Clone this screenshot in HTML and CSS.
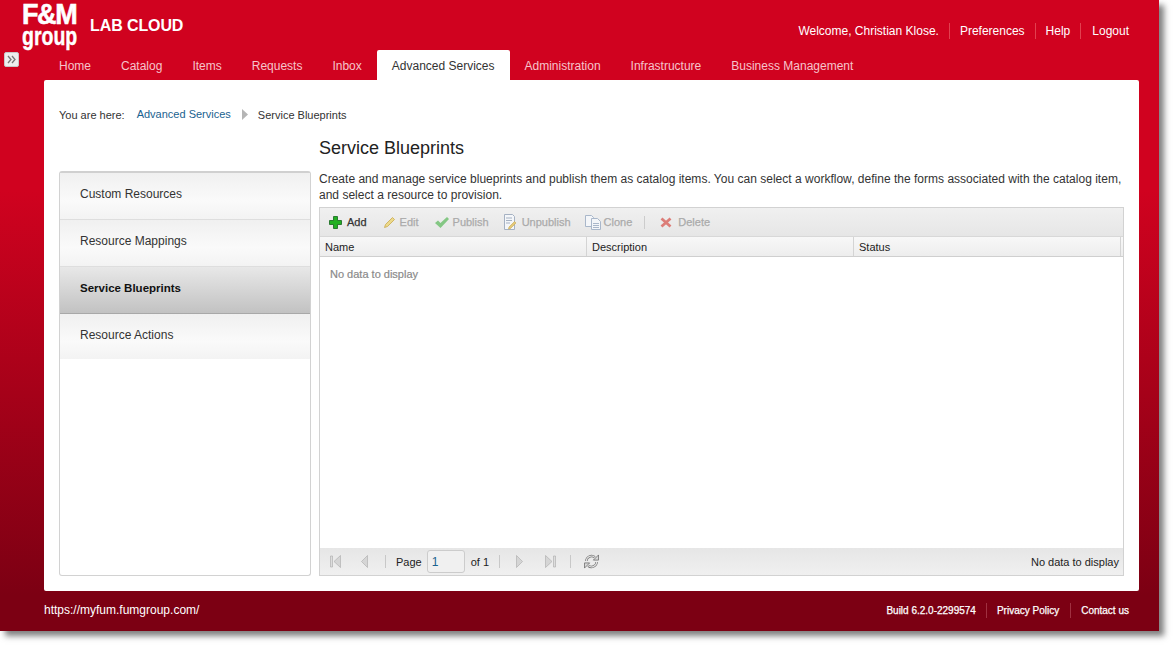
FILE: index.html
```html
<!DOCTYPE html>
<html lang="en">
<head>
    <meta charset="UTF-8">
    <title>Service Blueprints</title>
    <link rel="stylesheet" href="styles.css">
</head>
<body>
    <div class="frame">
        <!-- Header -->
        <div class="header">
            <div class="logo">
                <div class="logo-top">F&amp;M</div>
                <div class="logo-bottom">group</div>
            </div>
            <div class="product">LAB CLOUD</div>
            <ul class="user-links">
                <li>Welcome, Christian Klose.</li>
                <li>Preferences</li>
                <li>Help</li>
                <li>Logout</li>
            </ul>
        </div>

        <button class="expand">
            <svg width="9" height="9" viewBox="0 0 9 9"><path d="M1 1l3 3.5L1 8M5 1l3 3.5L5 8" fill="none" stroke="#777" stroke-width="1.3"/></svg>
        </button>

        <!-- Main tabs -->
        <ul class="tabs">
            <li>Home</li>
            <li>Catalog</li>
            <li>Items</li>
            <li>Requests</li>
            <li>Inbox</li>
            <li class="active">Advanced Services</li>
            <li>Administration</li>
            <li>Infrastructure</li>
            <li>Business Management</li>
        </ul>

        <!-- Content -->
        <div class="panel">
            <div class="breadcrumb">
                <span class="here">You are here:</span>
                <a class="crumb">Advanced Services</a>
                <svg class="crumb-arrow" width="6" height="11" viewBox="0 0 6 11"><path d="M0 0l6 5.5L0 11z" fill="#b5b5b5"/></svg>
                <span>Service Blueprints</span>
            </div>

            <div class="columns">
                <div class="sidenav">
                    <div class="side-item">Custom Resources</div>
                    <div class="side-item">Resource Mappings</div>
                    <div class="side-item selected">Service Blueprints</div>
                    <div class="side-item">Resource Actions</div>
                </div>

                <div class="main">
                    <h1>Service Blueprints</h1>
                    <p class="intro">Create and manage service blueprints and publish them as catalog items. You can select a workflow, define the forms associated with the catalog item, and select a resource to provision.</p>

                    <div class="grid-box">
                        <div class="toolbar">
                            <span class="tool tool-add">
                                <svg width="13" height="13" viewBox="0 0 13 13"><path d="M4.500.5h4v4h4v4h-4v4h-4v-4h-4v-4h4z" fill="#22b022" stroke="#14651c" stroke-width=".8"/></svg>
                                Add
                            </span>
                            <span class="tool">
                                <svg width="13" height="13" viewBox="0 0 13 13"><path d="M9.500 1.500l2 2L4.500 10.500l-3 1 1-3z" fill="#ecd98a" stroke="#c9a94e" stroke-width=".8"/></svg>
                                Edit
                            </span>
                            <span class="tool tool-publish">
                                <svg width="16" height="13" viewBox="0 0 16 13"><path d="M1 7l3-2.500 2.500 2.500L13 1l2 2-8.500 9z" fill="#84c784"/></svg>
                                Publish
                            </span>
                            <span class="tool tool-unpublish">
                                <svg width="14" height="16" viewBox="0 0 14 16"><path d="M1.500.5h8l2 2v13h-10z" fill="#f4f6f9" stroke="#a5b1c2"/><path d="M3 4h6M3 6.500h6M3 9h4" stroke="#a5b1c2"/><path d="M11.500 7.500l1.500 1.500-5.500 5.500-2 .5.500-2z" fill="#e3c879" stroke="#c9a94e" stroke-width=".6"/></svg>
                                Unpublish
                            </span>
                            <span class="tool tool-clone">
                                <svg width="16" height="16" viewBox="0 0 16 16"><path d="M.5 1.500h6l2 2v9h-8z" fill="#f4f6f9" stroke="#a9b7ca"/><path d="M6.500 4.500h6l3 3v8h-9z" fill="#f4f6f9" stroke="#a9b7ca"/><path d="M8 9.500h6M8 11.500h6M8 13.500h6" stroke="#a9b7ca"/></svg>
                                Clone
                            </span>
                            <span class="tool-sep"></span>
                            <span class="tool tool-delete">
                                <svg width="12" height="11" viewBox="0 0 12 11"><path d="M1.500 1.500l9 8M10.500 1.500l-9 8" stroke="#dc7d78" stroke-width="2.800"/></svg>
                                Delete
                            </span>
                        </div>

                        <div class="grid-head">
                            <div class="col">Name</div>
                            <div class="col">Description</div>
                            <div class="col">Status</div>
                        </div>

                        <div class="grid-body">No data to display</div>

                        <div class="pager">
                            <svg class="pg-first" width="11" height="13" viewBox="0 0 11 13"><path d="M.5 1h2v11h-2z" fill="#ddd" stroke="#aaa" stroke-width=".6"/><path d="M10.500.5v12L4 6.500z" fill="#d5d5d5" stroke="#aaa" stroke-width=".6"/></svg>
                            <svg class="pg-prev" width="7" height="13" viewBox="0 0 7 13"><path d="M6.500.5v12L.5 6.500z" fill="#d5d5d5" stroke="#aaa" stroke-width=".6"/></svg>
                            <span class="pg-sep pg-sep-first"></span>
                            <span>Page</span>
                            <input class="pg-input" value="1">
                            <span>of 1</span>
                            <span class="pg-sep"></span>
                            <svg class="pg-next" width="7" height="13" viewBox="0 0 7 13"><path d="M.5.5v12l6-6z" fill="#d5d5d5" stroke="#aaa" stroke-width=".6"/></svg>
                            <svg class="pg-last" width="11" height="13" viewBox="0 0 11 13"><path d="M.5.500v12L7 6.500z" fill="#d5d5d5" stroke="#aaa" stroke-width=".6"/><path d="M8.500 1h2v11h-2z" fill="#ddd" stroke="#aaa" stroke-width=".6"/></svg>
                            <span class="pg-sep pg-sep-last"></span>
                            <svg class="pg-refresh" width="15" height="15" viewBox="0 0 16 16">
                                <path d="M2.500 7.500A5.500 5.500 0 0 1 11.500 3.500" fill="none" stroke="#777" stroke-width="2.600"/>
                                <path d="M13.500 8.500A5.500 5.500 0 0 1 4.500 12.500" fill="none" stroke="#777" stroke-width="2.600"/>
                                <path d="M2.500 7.500A5.500 5.500 0 0 1 11.500 3.500" fill="none" stroke="#e4e4e4" stroke-width="1.100"/>
                                <path d="M13.500 8.500A5.500 5.500 0 0 1 4.500 12.500" fill="none" stroke="#e4e4e4" stroke-width="1.100"/>
                                <path d="M10 6.500h5.500V1zM6 9.500H.5V15z" fill="#d8d8d8" stroke="#666" stroke-width=".8"/>
                            </svg>
                            <span class="pg-status">No data to display</span>
                        </div>
                    </div>
                </div>
            </div>
        </div>

        <!-- Footer -->
        <div class="footer">
            <span class="site">https://myfum.fumgroup.com/</span>
            <ul class="foot-links">
                <li>Build 6.2.0-2299574</li>
                <li>Privacy Policy</li>
                <li>Contact us</li>
            </ul>
        </div>
    </div>
</body>
</html>
```

FILE: styles.css
```css
html, body {
    margin: 0;
    padding: 0;
    background: #fff;
}

body {
    font-family: "Liberation Sans", Arial, sans-serif;
    font-size: 12px;
    color: #333;
    width: 1174px;
    height: 646px;
    overflow: hidden;
}

ul {
    list-style: none;
    margin: 0;
    padding: 0;
}

.frame {
    position: relative;
    width: 1159px;
    height: 631px;
    background: linear-gradient(to bottom, #d0021f 0, #d0021f 190px, #7c0013 595px, #7c0013 100%);
    box-shadow: 5px 5px 6px rgba(60, 60, 60, 0.65);
    display: flex;
    flex-direction: column;
}

/* Header */
.header {
    height: 50px;
    display: flex;
    align-items: flex-start;
    color: #fff;
    flex: none;
}

.logo {
    margin: 3px 0 0 22px;
    width: 56px;
    color: #fff;
    font-weight: bold;
}

.logo-top {
    font-size: 29px;
    height: 23px;
    line-height: 23px;
    letter-spacing: -1.5px;
    -webkit-text-stroke: 0.6px #fff;
    transform: scaleX(0.93);
    transform-origin: left;
}

.logo-bottom {
    font-size: 25px;
    height: 22px;
    line-height: 21px;
    -webkit-text-stroke: 0.4px #fff;
    transform: scaleX(0.78);
    transform-origin: left;
}

.product {
    margin: 17px 0 0 12px;
    font-size: 16px;
    line-height: 18px;
    font-weight: bold;
    letter-spacing: -0.1px;
}

.user-links {
    margin: 23px 20px 0 auto;
    display: flex;
    height: 16px;
}

.user-links li {
    line-height: 16px;
    padding: 0 10px;
    border-left: 1px solid #e2404f;
}

.user-links li:first-child {
    border-left: 0;
}

.user-links li:last-child {
    padding-left: 11px;
}

.expand {
    position: absolute;
    left: 4px;
    top: 52px;
    width: 15px;
    height: 15px;
    padding: 0;
    border: 1px solid #c8c8c8;
    border-radius: 2px;
    background: #eee;
    display: flex;
    align-items: center;
    justify-content: center;
}

/* Tabs */
.tabs {
    display: flex;
    height: 30px;
    margin-left: 44px;
    flex: none;
}

.tabs li {
    padding: 0 15px;
    line-height: 32px;
    color: #f6c4cb;
}

.tabs li.active {
    background: #fff;
    color: #333;
    border-radius: 2px 2px 0 0;
}

/* Content panel */
.panel {
    margin: 0 20px 0 44px;
    height: 511px;
    flex: none;
    background: #fff;
    border-radius: 2px;
    box-sizing: border-box;
    padding: 27px 15px 15px;
    display: flex;
    flex-direction: column;
}

.breadcrumb {
    display: flex;
    align-items: center;
    height: 16px;
    font-size: 11px;
    flex: none;
}

.here {
    margin-right: 12px;
}

.crumb {
    color: #1a628f;
    position: relative;
    top: -1px;
}

.crumb-arrow {
    margin: 0 10px 0 11px;
    position: relative;
    top: -1px;
}

.columns {
    display: flex;
    flex: 1;
    min-height: 0;
    margin-top: 14px;
}

/* Side navigation */
.sidenav {
    width: 250px;
    flex: none;
    margin-top: 34px;
    border: 1px solid #d2d2d2;
    border-top: 2px solid #d0d0d0;
    border-radius: 3px;
    background: #fff;
}

.side-item {
    height: 46px;
    line-height: 42px;
    padding-left: 20px;
    border-bottom: 1px solid #dedede;
    background: linear-gradient(to bottom, #f0f0f0, #fafafa 60%, #f3f3f3);
}

.side-item:last-child {
    height: 45px;
    border-bottom: 0;
}

.side-item.selected {
    color: #111;
    font-size: 11.5px;
    font-weight: bold;
    background: linear-gradient(to bottom, #e8e8e8, #c2c2c2);
    border-bottom: 1px solid #a8a8a8;
}

/* Main column */
.main {
    width: 805px;
    margin-left: 8px;
    display: flex;
    flex-direction: column;
    flex: none;
}

h1 {
    margin: 0;
    font-size: 18px;
    font-weight: normal;
    line-height: 22px;
    color: #222;
}

.intro {
    margin: 12px 0 4px;
    line-height: 16px;
    letter-spacing: 0.012px;
    color: #333;
}

.grid-box {
    flex: 1;
    min-height: 0;
    border: 1px solid #d2d2d2;
    display: flex;
    flex-direction: column;
}

.toolbar {
    height: 28px;
    flex: none;
    display: flex;
    align-items: center;
    padding-left: 9px;
    background: linear-gradient(to bottom, #f0f0f0, #e6e6e6);
    font-size: 11px;
    color: #aaa;
    -webkit-text-stroke: 0.25px #aaa;
}

.tool {
    display: flex;
    align-items: center;
    gap: 4px;
    margin-right: 15px;
}

.tool-add {
    color: #333;
    -webkit-text-stroke: 0.25px #333;
    gap: 5px;
    margin-right: 16px;
}

.tool-publish {
    gap: 3px;
    margin-right: 14px;
}

.tool-unpublish {
    gap: 5px;
    margin-right: 14px;
}

.tool-clone {
    gap: 3px;
    margin-right: 12px;
}

.tool-delete {
    gap: 6px;
}

.tool-sep {
    width: 1px;
    height: 13px;
    background: #ccc;
    margin-right: 15px;
}

.grid-head {
    display: flex;
    height: 21px;
    flex: none;
    border-top: 1px solid #d8d8d8;
    border-bottom: 1px solid #cfcfcf;
    box-sizing: border-box;
    background: linear-gradient(to bottom, #f8f8f8, #ededed);
    line-height: 20px;
    font-size: 11px;
    color: #222;
}

.col {
    width: 267px;
    box-sizing: border-box;
    padding-left: 5px;
    border-right: 1px solid #d4d4d4;
}

.grid-body {
    flex: 1;
    padding: 11px 10px;
    font-size: 11px;
    color: #8a8a8a;
    -webkit-text-stroke: 0.2px #8a8a8a;
}

.pager {
    height: 27px;
    flex: none;
    display: flex;
    align-items: center;
    background: linear-gradient(to bottom, #e6e6e6, #f0f0f0);
    font-size: 11px;
    color: #222;
}

.pg-first {
    margin-left: 10px;
}

.pg-prev {
    margin-left: 20px;
}

.pg-sep {
    width: 1px;
    height: 13px;
    background: #c8c8c8;
    margin: 0 10px;
}

.pg-sep-first {
    margin-left: 17px;
}

.pg-sep-last {
    margin-left: 14px;
}

.pg-input {
    box-sizing: border-box;
    width: 38px;
    height: 23px;
    margin: 0 6px 0 5px;
    padding: 0 0 0 4px;
    border: 1px solid #ccc;
    border-radius: 3px;
    background: #f0f0f0;
    font: 12px "Liberation Sans", Arial, sans-serif;
    color: #1a628f;
}

.pg-next {
    margin-left: 6px;
}

.pg-last {
    margin-left: 22px;
}

.pg-refresh {
    margin-left: 3px;
}

.pg-status {
    margin-left: auto;
    margin-right: 4px;
}

/* Footer */
.footer {
    flex: 1;
    display: flex;
    align-items: center;
    padding: 0 20px 3px 44px;
    color: #fff;
}

.site {
    font-size: 12px;
}

.foot-links {
    margin-left: auto;
    display: flex;
    font-size: 10px;
    -webkit-text-stroke: 0.25px #fff;
    position: relative;
    top: 1px;
}

.foot-links li {
    padding: 0 10px;
    line-height: 15px;
    border-left: 1px solid #a03040;
}

.foot-links li:first-child {
    border-left: 0;
}

.foot-links li:nth-child(2) {
    padding-right: 11px;
}
```
